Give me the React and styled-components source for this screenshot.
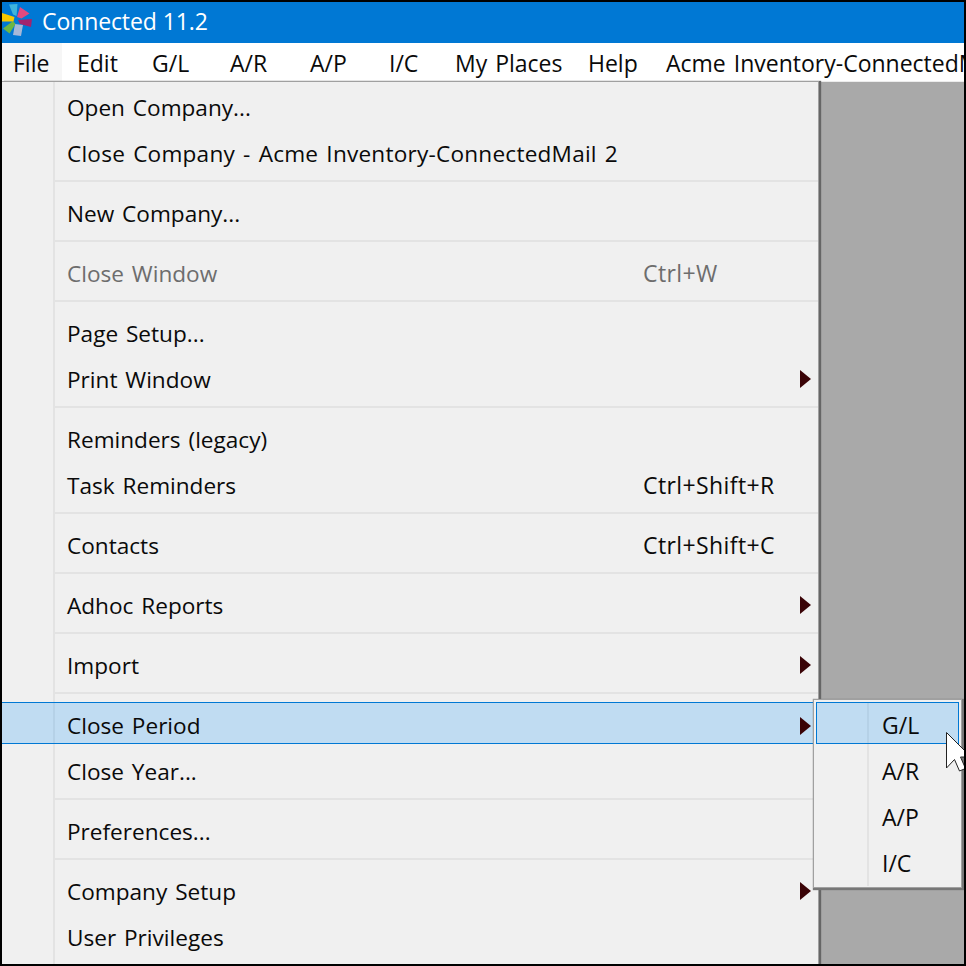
import styled, { createGlobalStyle } from 'styled-components';

const GlobalStyle = createGlobalStyle`
  html, body {
    margin: 0;
    padding: 0;
    background: #000;
  }
`;

const Frame = styled.div`
  position: relative;
  box-sizing: border-box;
  width: 966px;
  height: 966px;
  border: 2px solid #000;
  overflow: hidden;
  display: flex;
  flex-direction: column;
  font-family: 'Open Sans', 'Noto Sans', sans-serif;
  font-size: 23px;
  word-spacing: 2px;
  color: #0a0a0a;
`;

const TitleBar = styled.div`
  height: 41px;
  flex: none;
  display: flex;
  align-items: center;
  background: #0078d4;
  color: #fff;
  line-height: 37px;
  word-spacing: 0;
`;

const Logo = styled.svg`
  width: 34px;
  height: 37px;
  margin: 0 6px 0 0;
  flex: none;
`;

const TitleText = styled.span`
  margin-bottom: 2px;
  letter-spacing: -0.1px;
`;

const MenuBar = styled.div`
  height: 38px;
  flex: none;
  display: flex;
  align-items: center;
  background: #fff;
  overflow: hidden;
  white-space: nowrap;
`;

const MenuTitle = styled.div`
  flex: none;
  box-sizing: border-box;
  width: ${({ $w }) => $w}px;
  height: 100%;
  line-height: 40px;
  padding-left: ${({ $active }) => ($active ? 11 : 15)}px;
  background: ${({ $active }) => ($active ? '#f6f6f6' : 'transparent')};
`;

const Workspace = styled.div`
  position: relative;
  flex: 1;
  min-height: 0;
  background: #a9a9a9;
  border-top: 1px solid #ececec;
`;

const Menu = styled.div`
  box-sizing: border-box;
  display: flex;
  flex-direction: column;
  width: 817px;
  height: 883px;
  margin-top: -1px;
  padding-top: 2px;
  border-top: 1px solid #a0a0a0;
  border-right: 1px solid #a0a0a0;
  background: linear-gradient(#e3e3e3, #e3e3e3) 51px 0 / 2px 100% no-repeat, #f0f0f0;
  box-shadow: 2px 0 1px #666;
`;

const Group = styled.div`
  display: flex;
  flex-direction: column;
  flex: none;
`;

const Row = styled.div`
  box-sizing: border-box;
  display: flex;
  flex: none;
  height: ${({ $selected }) => ($selected ? 42 : 41)}px;
  margin-bottom: ${({ $selected }) => ($selected ? 4 : 5)}px;
  padding-left: ${({ $inset }) => $inset}px;
  line-height: 47px;
  white-space: nowrap;
  color: ${({ $disabled }) => ($disabled ? '#6d6d6d' : '#0a0a0a')};
  ${({ $selected }) =>
    $selected &&
    `
    background: rgba(0, 140, 250, 0.2);
    border-top: 1px solid #0078d4;
    border-bottom: 1px solid #0078d4;
    line-height: 45px;
  `}
`;

const Label = styled.span`
  width: 576px;
  flex: none;
  font-size: 22.6px;
  letter-spacing: ${({ $wide }) => ($wide ? 0.22 : 0)}px;
`;

const Shortcut = styled.span`
  flex: none;
  letter-spacing: 0.4px;
`;

const Arrow = styled.span`
  width: 0;
  height: 0;
  flex: none;
  align-self: center;
  margin: 5px 0 0 ${({ $offset }) => $offset}px;
  border-style: solid;
  border-width: 9px 0 9px 11px;
  border-color: transparent transparent transparent #3a0306;
`;

const Separator = styled.div`
  flex: none;
  height: 2px;
  margin: 4px 0 8px 53px;
  background: #e3e3e3;
`;

const Flyout = styled.div`
  position: absolute;
  top: 617px;
  left: 811px;
  box-sizing: border-box;
  display: flex;
  flex-direction: column;
  width: 149px;
  height: 189px;
  padding: 2px;
  border: 1px solid #a0a0a0;
  background: linear-gradient(#e3e3e3, #e3e3e3) 53px 2px / 2px 184px no-repeat, #f0f0f0;
  box-shadow: 1px 1px 1px 1px #777;
`;

const FlyoutRow = styled(Row)`
  padding-left: 66px;
  ${({ $selected }) => $selected && 'border: 1px solid #0078d4; padding-left: 65px;'}
`;

const Cursor = styled.svg`
  position: absolute;
  top: 730px;
  left: 944px;
  width: 30px;
  height: 44px;
`;

const groups = [
  [{ label: 'Open Company...' }, { label: 'Close Company - Acme Inventory-ConnectedMail 2', wide: true }],
  [{ label: 'New Company...' }],
  [{ label: 'Close Window', shortcut: 'Ctrl+W', disabled: true }],
  [{ label: 'Page Setup...' }, { label: 'Print Window', arrow: true }],
  [{ label: 'Reminders (legacy)' }, { label: 'Task Reminders', shortcut: 'Ctrl+Shift+R' }],
  [{ label: 'Contacts', shortcut: 'Ctrl+Shift+C' }],
  [{ label: 'Adhoc Reports', arrow: true }],
  [{ label: 'Import', arrow: true }],
  [{ label: 'Close Period', arrow: true, selected: true }, { label: 'Close Year...' }],
  [{ label: 'Preferences...' }],
  [{ label: 'Company Setup', arrow: true }, { label: 'User Privileges' }],
];

const titles = [
  ['File', 60],
  ['Edit', 75],
  ['G/L', 78],
  ['A/R', 80],
  ['A/P', 79],
  ['I/C', 66],
  ['My Places', 133],
  ['Help', 78],
  ['Acme Inventory-ConnectedMail 2', 400],
];

const App = () => (
  <>
    <GlobalStyle />
    <Frame>
      <TitleBar>
        <Logo viewBox="0 4 34 37">
          <path d="M7 4.500l8.500-.5-1 12-3.500-1.500z" fill="#3fb4dc" />
          <path d="M18 7l9.500 6.500-8 5-4.500-1.500z" fill="#e04a80" />
          <path d="M16 20l14-1-1 8-11-3z" fill="#a3246e" />
          <path d="M13 24l8 1-2 11-8-1z" fill="#a6b8d8" />
          <path d="M11 21l2.500 3-6 9.500-6.500-5z" fill="#6cb644" />
          <path d="M0 13l12.500 4-1 4.500H0z" fill="#f8c800" />
        </Logo>
        <TitleText>Connected 11.2</TitleText>
      </TitleBar>
      <MenuBar>
        {titles.map(([title, w], i) => (
          <MenuTitle key={title} $w={w} $active={i === 0}>
            {title}
          </MenuTitle>
        ))}
      </MenuBar>
      <Workspace>
        <Menu>
          {groups.map((group, i) => (
            <Group key={i}>
              {i > 0 && <Separator />}
              {group.map((item) => (
                <Row key={item.label} $inset={65} $disabled={item.disabled} $selected={item.selected}>
                  <Label $wide={item.wide}>{item.label}</Label>
                  {item.shortcut && <Shortcut>{item.shortcut}</Shortcut>}
                  {item.arrow && <Arrow $offset={157} />}
                </Row>
              ))}
            </Group>
          ))}
        </Menu>
        <Flyout>
          {['G/L', 'A/R', 'A/P', 'I/C'].map((label, i) => (
            <FlyoutRow key={label} $selected={i === 0}>
              {label}
            </FlyoutRow>
          ))}
        </Flyout>
      </Workspace>
      <Cursor viewBox="0 0 30 44">
        <path d="M.5.500V36l8-8.500 5 11.500 6-2.500-5-11.500H25z" fill="#fff" stroke="#222" strokeWidth="1" />
      </Cursor>
    </Frame>
  </>
);

export default App;
